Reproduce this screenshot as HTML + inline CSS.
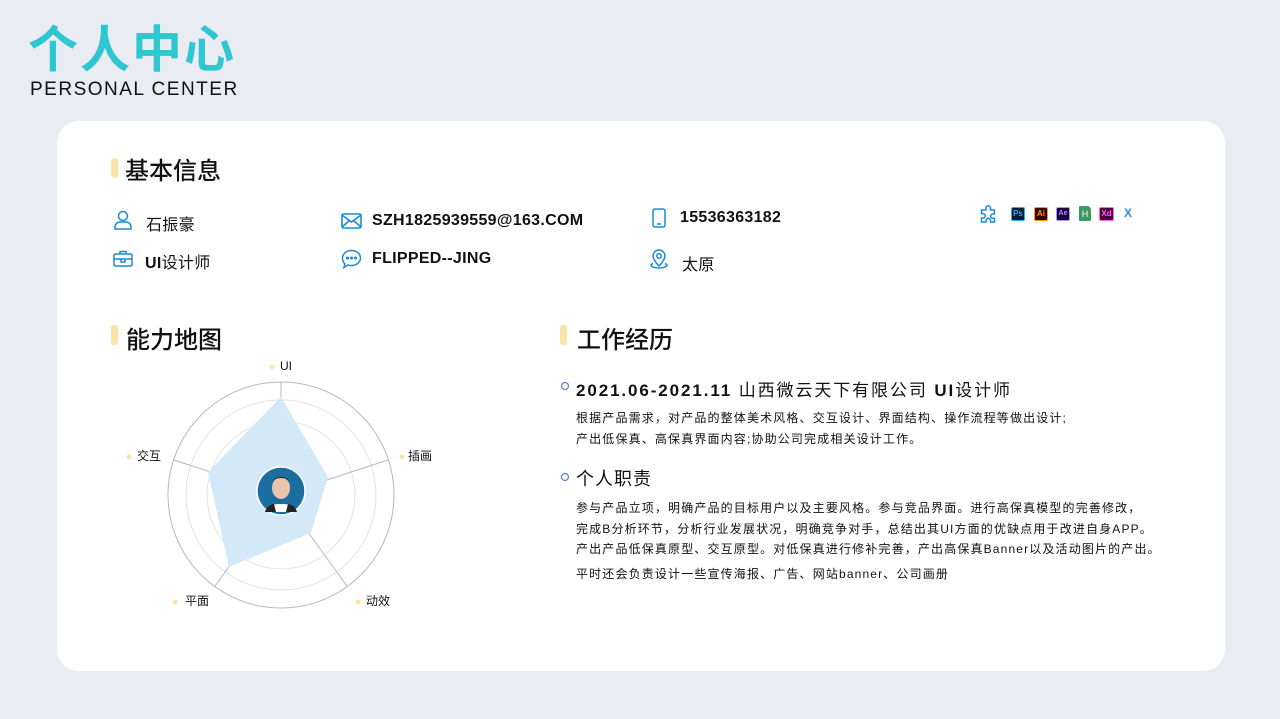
<!DOCTYPE html><html><head><meta charset="utf-8"><style>
*{margin:0;padding:0;box-sizing:border-box}
body{width:1280px;height:719px;background:#e9ecf3;position:relative;overflow:hidden;font-family:"Liberation Sans","Noto Sans CJK SC",sans-serif;color:#111}
.a{position:absolute;white-space:nowrap}
.card{position:absolute;left:57px;top:121px;width:1168px;height:550px;background:#fff;border-radius:22px}
.bar{position:absolute;width:7px;height:20px;background:#fbe3a8;border-radius:3px}
.h{font-size:24px;font-weight:500}
.t{font-size:16px;font-weight:bold;letter-spacing:0.3px}
.p{font-size:12px;letter-spacing:1.15px;line-height:20.5px}
.ic{position:absolute}
</style></head><body>
<div class="a" style="left:28px;top:22px;font-size:50px;font-weight:bold;color:#2ec6cf;letter-spacing:2px;line-height:56px">个人中心</div>
<div class="a" style="left:30px;top:80px;font-size:19px;color:#111;letter-spacing:1.5px;line-height:20px">PERSONAL CENTER</div>
<div class="card"></div>
<div class="bar" style="left:111px;top:158px"></div>
<div class="a h" style="left:125px;top:151px">基本信息</div>
<svg class="ic" style="left:113px;top:210px" width="20" height="20" fill="none" stroke="#1a8ad8" stroke-width="1.5"><circle cx="10" cy="6" r="4.5"/><path d="M2 19v-2a5 5 0 0 1 5-5h6a5 5 0 0 1 5 5v2z"/></svg>
<div class="a t" style="left:146px;top:211px;font-weight:normal">石振豪</div>
<svg class="ic" style="left:113px;top:250px" width="20" height="18" fill="none" stroke="#1a8ad8" stroke-width="1.5"><rect x="1" y="4" width="18" height="12" rx="1.5"/><path d="M7 4V1.5h6V4M1 9h18M8 9v3h4V9"/></svg>
<div class="a t" style="left:145px;top:249px">UI<span style="font-weight:normal">设计师</span></div>
<svg class="ic" style="left:341px;top:213px" width="21" height="16" fill="none" stroke="#1a8ad8" stroke-width="1.6"><rect x="1" y="1" width="19" height="14" rx="1.5"/><path d="M1 2l9.5 7L20 2M1 14l7-6M20 14l-7-6"/></svg>
<div class="a t" style="left:372px;top:212px">SZH1825939559@163.COM</div>
<svg class="ic" style="left:341px;top:249px" width="21" height="20" fill="none" stroke="#1a8ad8" stroke-width="1.5"><path d="M10.5 1.5c5 0 9 3.4 9 7.5s-4 7.5-9 7.5c-1.3 0-2.6-.2-3.7-.6L3 18.5l.8-3.7C2.3 13.4 1.5 11.3 1.5 9c0-4.1 4-7.5 9-7.5z"/><circle cx="6.5" cy="9" r=".8" fill="#1a8ad8"/><circle cx="10.5" cy="9" r=".8" fill="#1a8ad8"/><circle cx="14.5" cy="9" r=".8" fill="#1a8ad8"/></svg>
<div class="a t" style="left:372px;top:250px">FLIPPED--JING</div>
<svg class="ic" style="left:652px;top:208px" width="14" height="20" fill="none" stroke="#1a8ad8" stroke-width="1.5"><rect x="1" y="1" width="12" height="18" rx="2"/><path d="M5 16h4"/></svg>
<div class="a t" style="left:680px;top:209px">15536363182</div>
<svg class="ic" style="left:650px;top:248px" width="18" height="21" fill="none" stroke="#1a8ad8" stroke-width="1.5"><path d="M9 18s-6-6-6-10a6 6 0 0 1 12 0c0 4-6 10-6 10z"/><circle cx="9" cy="8" r="2.2"/><path d="M3 15.5c-1.5.6-2 1.3-2 1.8C1 18.8 4.6 20 9 20s8-1.2 8-2.7c0-.5-.6-1.2-2-1.8"/></svg>
<div class="a t" style="left:682px;top:251px;font-weight:normal">太原</div>
<svg class="ic" style="left:980px;top:205px" width="18" height="18" fill="none" stroke="#1a8ad8" stroke-width="1.5"><path d="M6 3a2.2 2.2 0 0 1 4.4 0V5h4v4h-1.5a2.2 2.2 0 0 0 0 4.4H14.5V17h-4v-1.5a2.2 2.2 0 0 0-4.4 0V17H1.5v-4H3a2.2 2.2 0 0 0 0-4.4H1.5V5H6z"/></svg>
<div class="a" style="left:1011px;top:207px;width:14px;height:14px;background:#001e36;border:1px solid #31a8ff;border-radius:2px;color:#31a8ff;font-size:8px;font-weight:bold;text-align:center;line-height:12px">Ps</div>
<div class="a" style="left:1034px;top:207px;width:14px;height:14px;background:#330000;border:1px solid #ff9a00;border-radius:2px;color:#ff9a00;font-size:8px;font-weight:bold;text-align:center;line-height:12px">Ai</div>
<div class="a" style="left:1056px;top:207px;width:14px;height:14px;background:#1f0040;border:1px solid #9999ff;border-radius:2px;color:#9999ff;font-size:7px;font-weight:bold;text-align:center;line-height:12px">Ae</div>
<div class="a" style="left:1079px;top:206px;width:12px;height:15px;background:#3c9a5f;border-radius:1px 4px 1px 1px;color:#fff;font-size:9px;text-align:center;line-height:16px">H</div>
<div class="a" style="left:1099px;top:207px;width:15px;height:14px;background:#470137;border:1px solid #ff61f6;border-radius:2px;color:#ff61f6;font-size:8px;font-weight:bold;text-align:center;line-height:12px">Xd</div>
<div class="a" style="left:1124px;top:206px;font-size:12px;font-weight:bold;color:#2b8de8">X</div>
<div class="bar" style="left:111px;top:325px"></div>
<div class="a h" style="left:126px;top:320px">能力地图</div>
<svg class="ic" style="left:0;top:0" width="600" height="719">
<g fill="none"><circle cx="281" cy="495" r="113" stroke="#b8b8b8"/><circle cx="281" cy="495" r="95" stroke="#e2e2e2"/><circle cx="281" cy="495" r="74" stroke="#e2e2e2"/></g>
<g stroke="#b8b8b8"><line x1="281" y1="495" x2="281" y2="382"/><line x1="281" y1="495" x2="388" y2="460"/><line x1="281" y1="495" x2="347" y2="586"/><line x1="281" y1="495" x2="215" y2="586"/><line x1="281" y1="495" x2="174" y2="460"/></g>
<polygon points="281,397 328,477 311,533 229,567 208,472" fill="#d3e9f7"/>
<circle cx="281" cy="491" r="24" fill="#1a6fa0" stroke="#fff" stroke-width="1.5"/>
<ellipse cx="281" cy="488" rx="9" ry="11" fill="#e9c3ad"/><path d="M272 484c0-8 18-8 18 0c0-3-3-7-9-7s-9 4-9 7z" fill="#222"/><path d="M265 512c3-7 8-8 16-8s13 1 16 8z" fill="#fff"/><path d="M265 512c2-6 5-7 9-8l2 8zM297 512c-2-6-5-7-9-8l-2 8z" fill="#222"/>
<g fill="#fbe3a8"><circle cx="272" cy="367" r="2.5"/><circle cx="402" cy="457" r="2.5"/><circle cx="358" cy="602" r="2.5"/><circle cx="175" cy="602" r="2.5"/><circle cx="129" cy="457" r="2.5"/></g>
<g font-size="12" fill="#111" font-family="Liberation Sans,Noto Sans CJK SC,sans-serif"><text x="280" y="370">UI</text><text x="408" y="460">插画</text><text x="366" y="605">动效</text><text x="185" y="605">平面</text><text x="137" y="460">交互</text></g>
<g fill="none" stroke="#5b7fd6" stroke-width="1.2"><circle cx="565" cy="386" r="3.5"/><circle cx="565" cy="477" r="3.5"/></g>
</svg>
<div class="bar" style="left:560px;top:325px"></div>
<div class="a h" style="left:577px;top:320px">工作经历</div>
<div class="a" style="left:576px;top:376px;font-size:17px;font-weight:bold;letter-spacing:1.9px">2021.06-2021.11 <span style="font-weight:normal">山西微云天下有限公司</span> UI<span style="font-weight:normal">设计师</span></div>
<div class="a p" style="left:576px;top:408px">根据产品需求，对产品的整体美术风格、交互设计、界面结构、操作流程等做出设计;<br>产出低保真、高保真界面内容;协助公司完成相关设计工作。</div>
<div class="a" style="left:576px;top:465px;font-size:18px;letter-spacing:1px">个人职责</div>
<div class="a p" style="left:576px;top:498px">参与产品立项，明确产品的目标用户以及主要风格。参与竞品界面。进行高保真模型的完善修改，<br>完成B分析环节，分析行业发展状况，明确竞争对手，总结出其UI方面的优缺点用于改进自身APP。<br>产出产品低保真原型、交互原型。对低保真进行修补完善，产出高保真Banner以及活动图片的产出。</div>
<div class="a p" style="left:576px;top:564px">平时还会负责设计一些宣传海报、广告、网站banner、公司画册</div>
</body></html>
